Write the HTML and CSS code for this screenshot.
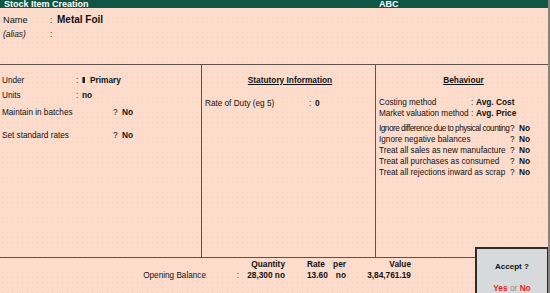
FILE: index.html
```html
<!DOCTYPE html>
<html lang="en">
<head>
    <meta charset="UTF-8">
    <title>Stock Item Creation</title>
    <link rel="stylesheet" href="styles.css">
</head>
<body>
    <div class="screen">
        <div class="titlebar">
            <span class="title">Stock Item Creation</span>
            <span class="company">ABC</span>
        </div>

        <section class="namebox">
            <div class="row name-row">
                <span class="name-label">Name</span>
                <span class="colon">:</span>
                <span class="name-value">Metal Foil</span>
            </div>
            <div class="row alias-row">
                <span class="name-label alias">(alias)</span>
                <span class="colon">:</span>
            </div>
        </section>

        <section class="panels">
            <div class="panel general">
                <div class="row">
                    <span class="lbl w-under">Under</span>
                    <span class="colon">:</span>
                    <span class="val"><span class="marker"></span>Primary</span>
                </div>
                <div class="row units">
                    <span class="lbl w-under">Units</span>
                    <span class="colon">:</span>
                    <span class="val">no</span>
                </div>
                <div class="row batches">
                    <span class="lbl w-ask">Maintain in batches</span>
                    <span class="ask">?</span>
                    <span class="val">No</span>
                </div>
                <div class="row rates">
                    <span class="lbl w-ask">Set standard rates</span>
                    <span class="ask">?</span>
                    <span class="val">No</span>
                </div>
            </div>

            <div class="panel statutory">
                <h3>Statutory Information</h3>
                <div class="row duty">
                    <span class="lbl w-duty">Rate of Duty (eg 5)</span>
                    <span class="colon">:</span>
                    <span class="val">0</span>
                </div>
            </div>

            <div class="panel behaviour">
                <h3>Behaviour</h3>
                <div class="row costing">
                    <span class="lbl w-method">Costing method</span>
                    <span class="colon">:</span>
                    <span class="val">Avg. Cost</span>
                </div>
                <div class="row">
                    <span class="lbl w-method">Market valuation method</span>
                    <span class="colon">:</span>
                    <span class="val">Avg. Price</span>
                </div>
                <div class="row flags">
                    <span class="lbl w-flag tight">Ignore difference due to physical counting</span>
                    <span class="ask">?</span>
                    <span class="val">No</span>
                </div>
                <div class="row">
                    <span class="lbl w-flag">Ignore negative balances</span>
                    <span class="ask">?</span>
                    <span class="val">No</span>
                </div>
                <div class="row">
                    <span class="lbl w-flag">Treat all sales as new manufacture</span>
                    <span class="ask">?</span>
                    <span class="val">No</span>
                </div>
                <div class="row">
                    <span class="lbl w-flag">Treat all purchases as consumed</span>
                    <span class="ask">?</span>
                    <span class="val">No</span>
                </div>
                <div class="row">
                    <span class="lbl w-flag">Treat all rejections inward as scrap</span>
                    <span class="ask">?</span>
                    <span class="val">No</span>
                </div>
            </div>
        </section>

        <section class="footer">
            <span></span>
            <span></span>
            <span class="head qty">Quantity</span>
            <span></span>
            <span class="head">Rate</span>
            <span class="head per">per</span>
            <span class="head value">Value</span>

            <span class="ob-label">Opening Balance</span>
            <span class="ob-colon">:</span>
            <span class="num qty">28,300 no</span>
            <span></span>
            <span class="num">13.60</span>
            <span class="num per">no</span>
            <span class="num value">3,84,761.19</span>
        </section>

        <div class="accept">
            <div class="accept-title">Accept ?</div>
            <div class="accept-choice"><b class="red">Yes</b> <span class="or">or</span> <b class="red">No</b></div>
        </div>
    </div>
</body>
</html>
```

FILE: styles.css
```css
* {
    margin: 0;
    padding: 0;
    box-sizing: border-box;
}

body {
    font-family: 'Liberation Sans', Arial, sans-serif;
    font-size: 8.2px;
    color: #111;
    background-color: #fcdccb;
}

.screen {
    position: relative;
    width: 550px;
    height: 293px;
    overflow: hidden;
    background-color: #fddccb;
    background-image: radial-gradient(circle, rgba(214, 150, 170, 0.22) 0.5px, transparent 0.8px);
    background-size: 5px 5px;
    border-right: 2px solid #8a8480;
}

.titlebar {
    height: 8px;
    background-color: #0f5644;
    color: #fff;
    font-weight: bold;
    font-size: 9px;
    line-height: 8px;
    display: flex;
}
.titlebar .title {
    padding-left: 4px;
    width: 379px;
}

.row {
    display: flex;
    align-items: baseline;
    line-height: 10px;
    white-space: nowrap;
}

.colon {
    width: 6px;
    color: #333;
}
.ask {
    width: 9px;
}
.val {
    font-weight: bold;
    font-size: 8.3px;
}

/* name block */
.namebox {
    height: 56px;
    padding: 6px 0 0 3px;
}
.name-row {
    line-height: 12px;
}
.name-label {
    width: 47px;
    font-size: 9.2px;
}
.alias {
    font-style: italic;
    font-size: 8.4px;
}
.alias-row {
    margin-top: 1px;
    line-height: 12px;
}
.name-value {
    margin-left: 1px;
    font-weight: bold;
    font-size: 10px;
}

/* three panels */
.panels {
    display: grid;
    grid-template-columns: 201px 174px 1fr;
    height: 194px;
    border-top: 1px solid #5b5250;
    border-bottom: 1px solid #5b5250;
}
.panel {
    padding-top: 10px;
}
.panel + .panel {
    border-left: 1px solid #5b5250;
}
.panel h3 {
    text-align: center;
    font-size: 8.3px;
    line-height: 10px;
    text-decoration: underline;
}

.general {
    padding-left: 2px;
}
.w-under { width: 74px; }
.w-ask { width: 111px; }
.marker {
    display: inline-block;
    width: 3px;
    height: 6px;
    margin-right: 5px;
    background-color: #222;
    border-left: 1px solid #777;
}
.units { margin-top: 4px; }
.batches { margin-top: 6px; }
.rates { margin-top: 12px; }

.statutory {
    padding-left: 3px;
}
.w-duty { width: 104px; }
.duty { margin-top: 13px; }

.behaviour {
    padding-left: 3px;
}
.w-method { width: 92px; }
.w-flag { width: 131px; }
.tight { letter-spacing: -0.5px; }
.costing { margin-top: 12px; }
.flags { margin-top: 4px; }
.behaviour .colon { width: 5px; }

/* opening balance */
.footer {
    display: grid;
    grid-template-columns: 206px 36px 43px 22px 23px 16px 65px;
    grid-auto-rows: 11px;
    padding-top: 1px;
    line-height: 11px;
    white-space: nowrap;
}
.footer .head,
.footer .num {
    font-weight: bold;
    font-size: 8.3px;
}
.footer .qty,
.footer .value,
.footer .per {
    text-align: right;
}
.ob-label {
    text-align: right;
}
.ob-colon {
    text-align: right;
    padding-right: 3px;
    color: #555;
}

/* popup */
.accept {
    position: absolute;
    left: 475px;
    top: 247px;
    width: 74px;
    height: 50px;
    background-color: #d6dada;
    border: 2px solid #2e2b2b;
    text-align: center;
}
.accept-title {
    margin-top: 13px;
    font-weight: bold;
    font-size: 8px;
    line-height: 10px;
}
.accept-choice {
    margin-top: 11px;
    font-size: 8.3px;
    line-height: 10px;
}
.red {
    color: #ee1b1b;
}
.or {
    color: #8a8a8a;
}
```
